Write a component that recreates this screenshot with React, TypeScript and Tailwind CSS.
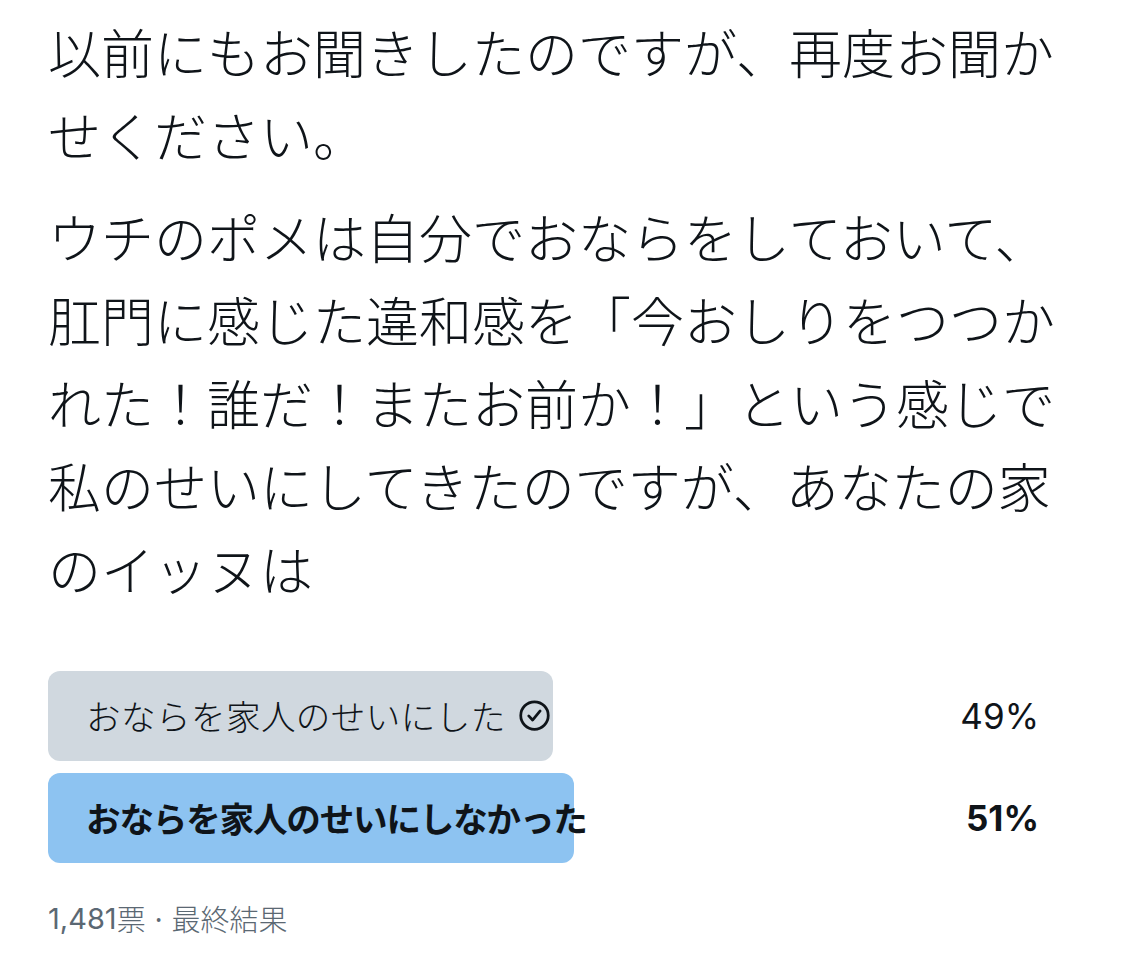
const jp = "font-['Noto_Sans_CJK_JP',sans-serif]";

type Choice = { label: string; pct: number; winner?: boolean; mine?: boolean };

const choices: Choice[] = [
  { label: "おならを家人のせいにした", pct: 49, mine: true },
  { label: "おならを家人のせいにしなかった", pct: 51, winner: true },
];

function CheckCircle() {
  return (
    <svg viewBox="0 0 24 24" fill="none" className="ml-[12px] h-[33px] w-[33px] shrink-0">
      <circle cx="12" cy="12" r="10" stroke="#0f1419" strokeWidth="2" />
      <path d="M7.8 12.3l2.8 3 5.5-6.6" stroke="#0f1419" strokeWidth="2" strokeLinecap="round" strokeLinejoin="round" />
    </svg>
  );
}

function PollRow({ c }: { c: Choice }) {
  return (
    <div className="relative flex h-[90px] items-center justify-between">
      <div
        className={`absolute left-0 top-0 h-full rounded-[12px] ${c.winner ? "bg-[#8dc3f1]" : "bg-[#d0d8df]"}`}
        style={{ width: `${c.pct}%` }}
      />
      <div
        className={`relative flex items-center pl-[38px] text-[34.6px] text-[#0f1419] whitespace-nowrap ${
          c.winner ? "font-bold tracking-[-1.2px]" : "font-light tracking-[0.4px]"
        }`}
      >
        <span className={jp}>{c.label}</span>
        {c.mine && <CheckCircle />}
      </div>
      <span className={`relative pr-[40px] text-[35px] text-[#0f1419] font-['Inter',sans-serif] ${c.winner ? "font-bold" : ""}`}>
        {c.pct}%
      </span>
    </div>
  );
}

export default function App() {
  return (
    <div className="w-[1125px] h-[958px] bg-white overflow-hidden">
      <div className="pl-[48px] pr-[46px] pt-[10px]">
        <div className={`${jp} font-light text-[53px] leading-[83px] text-[#0f1419] whitespace-nowrap`}>
          <p>
            以前にもお聞きしたのですが、再度お聞か
            <br />
            せください。
          </p>
          <p className="mt-[19px]">
            ウチのポメは自分でおならをしておいて、
            <br />
            肛門に感じた違和感を「今おしりをつつか
            <br />
            れた！誰だ！またお前か！」という感じで
            <br />
            私のせいにしてきたのですが、あなたの家
            <br />
            のイッヌは
          </p>
        </div>

        <div className="mt-[61px] flex flex-col gap-[12px]">
          {choices.map((c) => (
            <PollRow key={c.label} c={c} />
          ))}
        </div>

        <div className="mt-[34px] flex items-center text-[29px] text-[#5b6873]">
          <span className="font-['Inter',sans-serif]">1,481</span>
          <span className={`${jp} font-light`}>票</span>
          <span className="mx-[9px]">·</span>
          <span className={`${jp} font-light`}>最終結果</span>
        </div>
      </div>
    </div>
  );
}
